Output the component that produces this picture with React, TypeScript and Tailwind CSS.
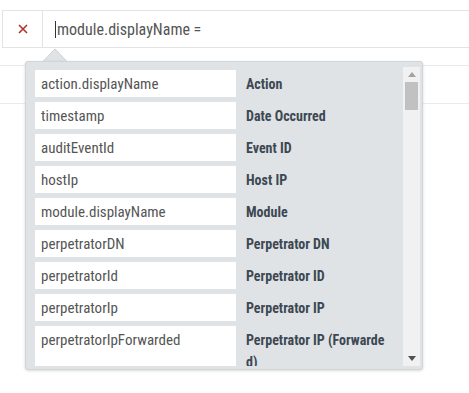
import { Fragment } from "react";

const fields = [
  { key: "action.displayName", label: "Action" },
  { key: "timestamp", label: "Date Occurred" },
  { key: "auditEventId", label: "Event ID" },
  { key: "hostIp", label: "Host IP" },
  { key: "module.displayName", label: "Module" },
  { key: "perpetratorDN", label: "Perpetrator DN" },
  { key: "perpetratorId", label: "Perpetrator ID" },
  { key: "perpetratorIp", label: "Perpetrator IP" },
  { key: "perpetratorIpForwarded", label: "Perpetrator IP (Forwarded)" },
];

const condensed = { fontFamily: "'Roboto Condensed', Roboto, 'Liberation Sans', sans-serif" };

const App = () => {
  return (
    <div className="relative w-[469px] h-[393px] bg-white overflow-hidden" style={condensed}>
      {/* query bar */}
      <div className="pt-[10px] pl-[2px]">
        <div className="flex h-[38px] border-y border-[#e3e3e3]">
          <div className="w-[41px] flex items-center justify-center border-x border-[#e3e3e3]">
            <svg width="10" height="10" viewBox="0 0 10 10">
              <path d="M1 1 L9 9 M9 1 L1 9" stroke="#b5312a" strokeWidth="1.6" />
            </svg>
          </div>
          <div className="flex items-center pl-[12px] text-[16px] text-[#555]">
            <span className="border-l border-[#333] pl-[1px] leading-[17px]">module.displayName =</span>
          </div>
        </div>
      </div>

      {/* table rows behind */}
      <div className="mt-[17px] border-y border-[#e8ebed] h-[39px]" />

      {/* autocomplete popup */}
      <svg className="absolute left-[42px] top-[48px]" width="26" height="15" viewBox="0 0 26 15">
        <path d="M0.5 14 L13 1 L25.5 14" fill="#dfe3e6" stroke="#ccd1d4" />
      </svg>
      <div className="absolute left-[25px] top-[61px] w-[398px] h-[309px] flex rounded-[3px] bg-[#dfe3e6] border border-[#d0d5d8] shadow-[0_1px_3px_rgba(0,0,0,0.15)] pt-[5px] pb-[3px] pr-[2px]">
        <div className="flex-1 overflow-hidden pt-[3px] pl-[9px]">
          {fields.map((f) => (
            <Fragment key={f.key}>
              <div className="flex gap-[10px] mb-[5px]">
                <div className="w-[201px] shrink-0 bg-white px-[6px] pt-[3px] pb-[2px] text-[15px] leading-[22px] text-[#555]">
                  {f.key}
                </div>
                <div className="w-[142px] pt-[3px] pb-[2px] text-[14px] leading-[22px] font-bold text-[#3d4852] break-all">
                  {f.label}
                </div>
              </div>
            </Fragment>
          ))}
        </div>
        <div className="w-[17px] bg-[#f1f1f1] flex flex-col items-center">
          <div className="h-[15px] flex items-center justify-center">
            <svg width="8" height="5" viewBox="0 0 8 5">
              <path d="M0 5 L4 0 L8 5 Z" fill="#a3a3a3" />
            </svg>
          </div>
          <div className="w-[13px] h-[28px] bg-[#c1c1c1]" />
          <div className="flex-1" />
          <div className="h-[15px] flex items-center justify-center">
            <svg width="8" height="5" viewBox="0 0 8 5">
              <path d="M0 0 L4 5 L8 0 Z" fill="#505050" />
            </svg>
          </div>
        </div>
      </div>
    </div>
  );
};

export default App;
